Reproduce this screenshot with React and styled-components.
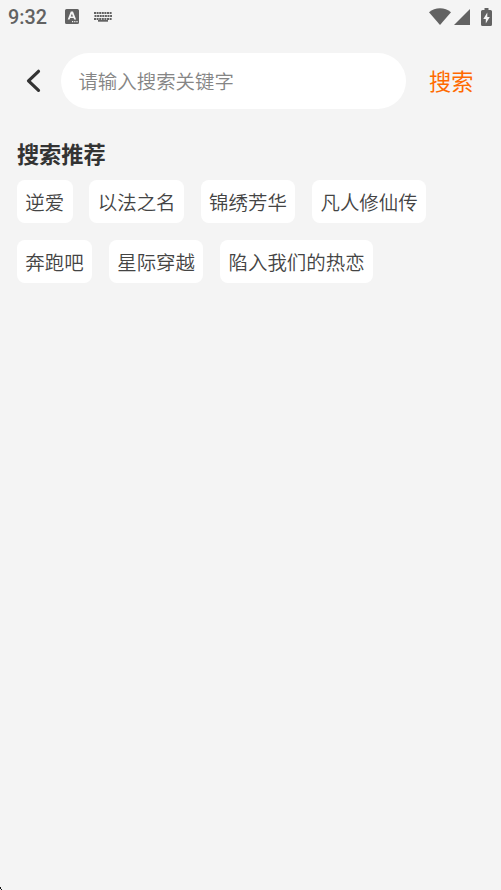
import React from "react";
import styled, { createGlobalStyle } from "styled-components";

const GlobalStyle = createGlobalStyle`
  * { box-sizing: border-box; }
  body { margin: 0; background: #f4f4f4; }
`;

const Screen = styled.div`
  position: relative;
  display: flex;
  flex-direction: column;
  width: 100%;
  height: 890px;
  overflow: hidden;
  background: #f4f4f4;
  color: #444;
  font-family: "Noto Sans CJK SC", sans-serif;
`;

const StatusBar = styled.div`
  display: flex;
  align-items: center;
  flex: none;
  height: 33px;
  padding: 0 7px 0 8px;
  color: #626262;
`;

const Clock = styled.span`
  width: 57px;
  padding-top: 2px;
  font: 500 19.8px/32px Roboto, sans-serif;
`;

const StatusIcon = styled.svg`
  display: block;
  flex: none;
  margin-right: ${(p) => p.$after || 0}px;
  fill: currentColor;
`;

const Spacer = styled.div`
  flex: 1;
`;

const SearchBar = styled.header`
  display: flex;
  align-items: center;
  flex: none;
  height: 56px;
  margin-top: 20px;
  padding-left: 17px;
`;

const BackButton = styled.button`
  display: flex;
  flex: none;
  width: 44px;
  padding: 0 0 0 9px;
  border: 0;
  background: none;
`;

const SearchInput = styled.input`
  width: 345px;
  height: 55.5px;
  padding: 0 17.4px 2px;
  border: 0;
  border-radius: 28px;
  outline: 0;
  background: #fff;
  color: #444;
  font: 350 19.45px/28px "Noto Sans CJK SC", sans-serif;

  &::placeholder {
    color: #858585;
    opacity: 1;
  }
`;

const SearchButton = styled.button`
  margin-left: 23px;
  padding: 0 0 2px;
  border: 0;
  background: none;
  color: #ff6a00;
  font: 400 22.2px/32px "Noto Sans CJK SC", sans-serif;
`;

const Recommendations = styled.section`
  padding: 28px 16.9px 0;
`;

const Heading = styled.h2`
  margin: 0;
  color: #333;
  font-size: 22.2px;
  font-weight: 700;
  line-height: 33px;
`;

const TagList = styled.div`
  display: flex;
  flex-wrap: wrap;
  gap: 17px 16.8px;
  margin-top: 10px;
`;

const Tag = styled.button`
  height: 43px;
  padding: 0 8.4px;
  border: 0;
  border-radius: 8px;
  background: #fff;
  color: #444;
  font: 350 19.47px/43px "Noto Sans CJK SC", sans-serif;
  white-space: nowrap;
`;

const CornerMark = styled.svg`
  position: absolute;
  left: 0;
  bottom: 0;
`;

const tags = ["逆爱", "以法之名", "锦绣芳华", "凡人修仙传", "奔跑吧", "星际穿越", "陷入我们的热恋"];

const keyRows = [0, 3, 6];
const keyColumns = [0, 2.6, 5.2, 7.8, 10.4, 13, 15.6];

export default function App() {
  return (
    <>
      <GlobalStyle />
      <Screen>
        <StatusBar>
          <Clock>9:32</Clock>
          <StatusIcon width="14" height="15" viewBox="0 0 14 15" $after={15}>
            <path
              fillRule="evenodd"
              d="M1.5 0h11Q14 0 14 1.5v12q0 1.5-1.5 1.5h-11Q0 15 0 13.5v-12Q0 0 1.5 0zM5.8 2.500L2.700 10.5h1.900l.6-1.600h3.400l.6 1.600h1.900L8 2.500zM6.900 4.8l1.100 2.700H5.800zM7 12v1.2h1.2V12zm2.2 0v1.2h1.2V12zm2.2 0v1.2h1.2V12z"
            />
          </StatusIcon>
          <StatusIcon width="18" height="10" viewBox="0 0 18 10">
            {keyRows.map((y, row) =>
              keyColumns.map((x) => (
                <rect key={`${y}-${x}`} x={x + (row === 1 ? 0.5 : 0)} y={y} width="2" height="2" />
              ))
            )}
            <rect x="4" y="8" width="10" height="1.7" />
          </StatusIcon>
          <Spacer />
          <StatusIcon width="22" height="17" viewBox="0 0 22 17" $after={3}>
            <path d="M0 4.2C6-1.2 16-1.2 22 4.2L11 17z" />
          </StatusIcon>
          <StatusIcon width="16" height="16" viewBox="0 0 16 16" $after={11}>
            <path d="M16 0v16H0z" />
          </StatusIcon>
          <StatusIcon width="11" height="18" viewBox="0 0 11 18" $after={2}>
            <path
              fillRule="evenodd"
              d="M3.5 0h4v2h2Q11 2 11 3.5v13Q11 18 9.5 18h-8Q0 18 0 16.500v-13Q0 2 1.500 2h2zM6.300 4.500L2.300 11h2.500v4.500L8.800 9H6.300z"
            />
          </StatusIcon>
        </StatusBar>
        <SearchBar>
          <BackButton aria-label="返回">
            <svg width="16" height="24" viewBox="0 0 16 24" fill="none">
              <path d="M12.500 2.300L2.500 11.800l10 9.500" stroke="#333" strokeWidth="3.200" strokeLinecap="round" strokeLinejoin="round" />
            </svg>
          </BackButton>
          <SearchInput placeholder="请输入搜索关键字" />
          <SearchButton>搜索</SearchButton>
        </SearchBar>
        <Recommendations>
          <Heading>搜索推荐</Heading>
          <TagList>
            {tags.map((tag) => (
              <Tag key={tag}>{tag}</Tag>
            ))}
          </TagList>
        </Recommendations>
        <CornerMark width="2" height="3" viewBox="0 0 2 3">
          <path d="M0 0h1v2h1v1H1V2H0z" fill="#111" />
        </CornerMark>
      </Screen>
    </>
  );
}
